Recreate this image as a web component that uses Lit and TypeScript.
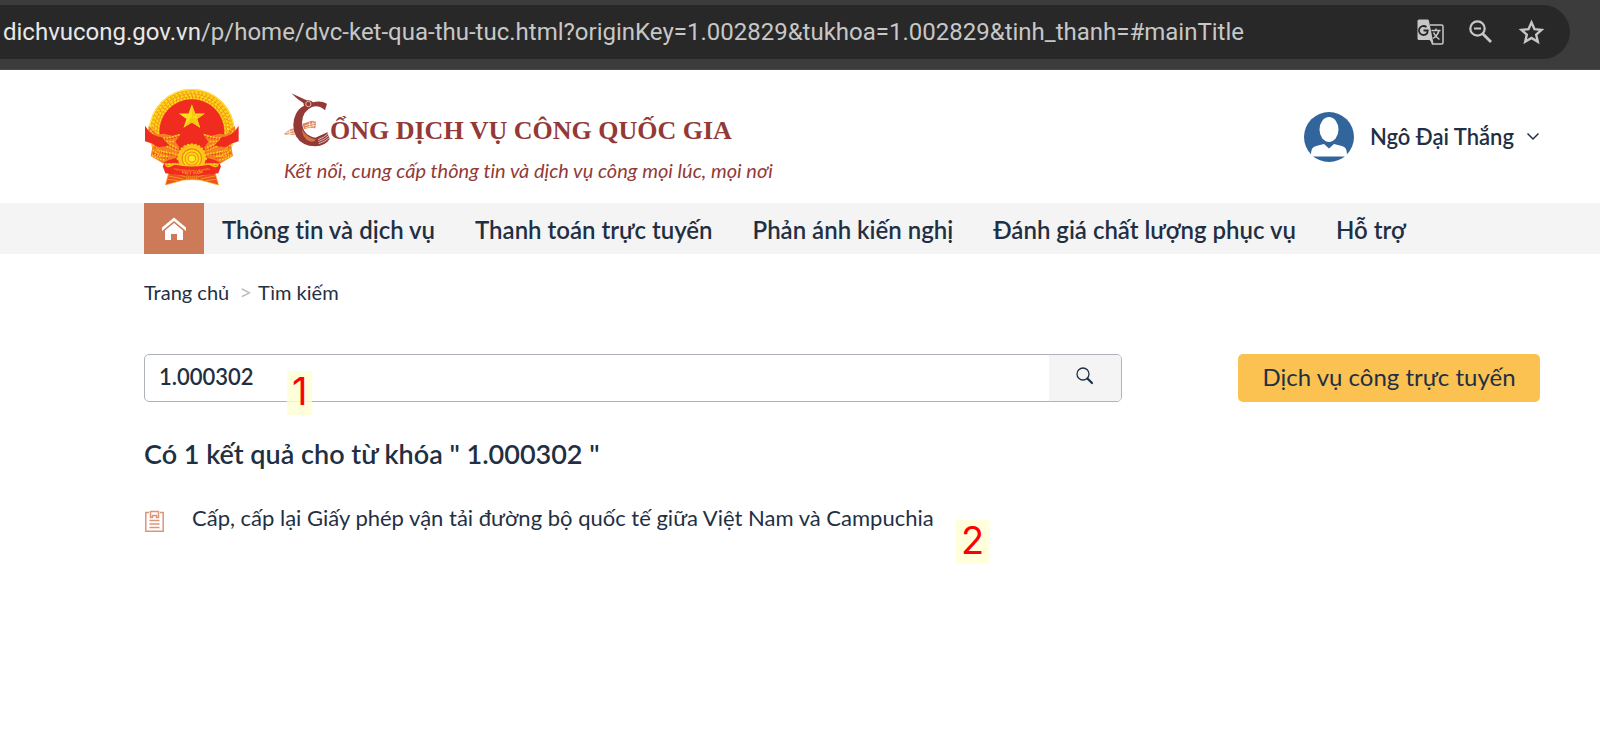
import { LitElement, html, css, svg } from "lit";
import { customElement, property, state } from "lit/decorators.js";

const ring = (r: number, color: string, width: number, dash: string) =>
  svg`<circle cx="187" cy="168" r=${r} fill="none" stroke=${color} stroke-width=${width} stroke-dasharray=${dash} />`;

const gearTeeth = Array.from({ length: 13 }, (_, i) => 180 + i * 15).map((deg) => {
  const a = (deg * Math.PI) / 180;
  return svg`<circle cx=${(187 + 41 * Math.cos(a)).toFixed(1)} cy=${(248 + 41 * Math.sin(a)).toFixed(1)} r="5" fill="#fdc516" />`;
});

const riceHalf = svg`
  <path d="M58 150 L56 170 L70 208 L64 240 L100 262 L118 252 L140 246 L150 215 L138 198 L154 174 L128 180 L104 174 L84 176 Z" fill="#f58220" />
  <g fill="none" stroke="#ffd51a" stroke-width="4" stroke-dasharray="5 4">
    <path d="M64 164 Q76 192 104 200 T142 216" />
    <path d="M84 182 Q98 190 116 186 T152 176" />
    <path d="M94 190 Q114 200 138 196" />
    <path d="M72 206 Q86 228 114 230 T140 238" />
    <path d="M70 222 Q88 240 120 242" />
    <path d="M68 238 Q86 252 110 252" />
    <path d="M104 208 Q122 216 146 226" />
  </g>
  <g fill="none" stroke="#e8301f" stroke-width="3" stroke-dasharray="4 5">
    <path d="M90 186 Q116 194 146 182" />
    <path d="M76 214 Q98 236 130 237" />
    <path d="M72 230 Q92 248 116 247" />
    <path d="M108 204 Q124 212 142 222" />
  </g>
  <path d="M47 150 L60 168 Q76 182 98 184 Q106 196 118 206 Q112 214 98 212 Q84 218 70 204 L47 196 Z" fill="#ee2b1f" />
  <path d="M82 222 Q96 230 112 226 M76 236 Q92 246 112 240" stroke="#ffd51a" stroke-width="4" stroke-dasharray="4 3" fill="none" />
`;

const emblem = svg`
  <svg class="emblem" viewBox="44 37 287 293" role="img" aria-label="Quốc huy Việt Nam">
    <circle cx="187" cy="168" r="128" fill="#f9a51b" />
    ${ring(126, "#ffe23a", 4, "none")}
    ${ring(118, "#ffdd14", 8, "8 4")}
    ${ring(118, "#e8791c", 2, "3 9")}
    ${ring(109, "#ffdd14", 7, "7 5")}
    ${ring(113, "#d9661c", 2, "4 7")}
    ${ring(101, "#ffdd14", 6, "6 4")}
    ${ring(104, "#dd6a1c", 2, "4 6")}
    <circle cx="187" cy="168" r="97" fill="#f02c20" />
    <path d="M96 200 H278 L272 262 H102 Z" fill="#f02c20" />
    <path d="M187 86 L197 113 H226 L203 130 L212 156 L187 140 L162 156 L171 130 L148 113 H177 Z" fill="#ffe11a" />
    <path d="M187 86 L187 123 L203 130 L212 156 L187 140 L162 156 L187 123 L148 113 L187 123 L226 113 L203 130 Z" fill="#f6c713" />
    ${riceHalf}
    <g transform="translate(374 0) scale(-1 1)">${riceHalf}</g>
    <path d="M124 268 L108 327 L162 312 L187 311 L212 312 L267 327 L250 268 Z" fill="#f04e23" stroke="#f9b21c" stroke-width="2" />
    <g stroke="#fbb81b" stroke-width="2" fill="none">
      <path d="M120 290 L168 302 M117 300 L160 309 M114 310 L146 314 M254 290 L206 302 M257 300 L214 309 M260 310 L228 314" />
      <path d="M172 292 V311 M178 292 V311 M184 292 V311 M190 292 V311 M196 292 V311 M202 292 V311" />
    </g>
    <circle cx="187" cy="248" r="41" fill="#fdc516" />
    ${gearTeeth}
    <circle cx="187" cy="248" r="29" fill="#fdd90d" stroke="#f47a1f" stroke-width="3" />
    <circle cx="187" cy="248" r="20" fill="none" stroke="#f58a1d" stroke-width="3" />
    <circle cx="187" cy="248" r="11" fill="#ffe81f" stroke="#f58a1d" stroke-width="3" />
    <path d="M104 262 Q120 276 140 264 Q187 276 234 264 Q254 276 270 262 L274 272 L266 292 Q187 306 108 292 L100 272 Z" fill="#f02c20" />
    <path d="M108 264 Q112 276 124 270 Q132 262 146 266 Q187 274 228 266 Q242 262 250 270 Q262 276 266 264" fill="none" stroke="#fdc516" stroke-width="4" />
    <path id="band-top" d="M128 280 Q187 292 246 280" fill="none" />
    <path id="band-name" d="M148 290 Q187 300 228 290" fill="none" />
    <text class="band small"><textPath href="#band-top" startOffset="50%">CỘNG HÒA XÃ HỘI CHỦ NGHĨA</textPath></text>
    <text class="band"><textPath href="#band-name" startOffset="50%">VIỆT NAM</textPath></text>
  </svg>
`;

const craneC = svg`
  <svg class="crane" viewBox="44 38 138 162" aria-hidden="true">
    <path d="M44 160 L62 147 L76 143 L76 164 L48 163 Z" fill="#e39a74" />
    <path d="M50 158 L74 150 M54 162 L75 158 M60 148 L62 164" stroke="#fff" stroke-width="2" />
    <path d="M100 130 L128 121 L140 124 L138 144 L124 142 L104 146 Z" fill="#dd8256" />
    <path d="M106 136 L138 128 M108 142 L138 135 M120 124 L122 142 M130 124 L132 142" stroke="#fff" stroke-width="2" />
    <path d="M66 39 L112 60 Q124 58 131 66 Q154 60 173 70 L167 90 Q148 72 128 80 Q100 92 98 126 Q100 166 138 172 L174 156 L181 176 Q168 197 138 198 Q98 198 80 168 Q64 132 80 100 Q88 84 104 76 L102 68 Q84 58 66 39 Z" fill="#933a37" />
    <circle cx="117" cy="71" r="8" fill="none" stroke="#e2b39c" stroke-width="3" />
    <path d="M98 146 Q108 170 140 178 Q130 190 112 178 Q98 166 98 146 Z" fill="#d0744a" />
    <path d="M146 178 Q164 172 176 160 M147 184 Q166 178 178 166 M148 190 Q168 184 180 172" stroke="#fff" stroke-width="2" fill="none" />
  </svg>
`;

@customElement("browser-bar")
class BrowserBar extends LitElement {
  @property() host = "";
  @property() path = "";

  static styles = css`
    :host {
      display: block;
      padding: 5px 30px 10px 0;
      background: #3c3c3c;
      border-bottom: 1px solid #484848;
    }
    .pill {
      display: flex;
      align-items: center;
      justify-content: space-between;
      height: 54px;
      padding: 0 24px 0 3px;
      border-radius: 0 27px 27px 0;
      background: #282828;
      color: #c7c7c7;
      font: 24px/32px Roboto, sans-serif;
      white-space: nowrap;
    }
    .host { color: #e8e8e8; }
    .tools { display: flex; gap: 20px; }
    button {
      display: block;
      padding: 0;
      border: 0;
      background: none;
      color: #c7c7c7;
      cursor: pointer;
    }
    svg { display: block; width: 30px; height: 30px; }
  `;

  render() {
    return html`
      <div class="pill">
        <span><span class="host">${this.host}</span>${this.path}</span>
        <div class="tools">
          <button aria-label="Dịch trang này">
            <svg viewBox="0 0 30 30">
              <path d="M14 8h11.500a1.500 1.500 0 0 1 1.500 1.500v16a1.500 1.500 0 0 1-1.500 1.500H16.500L14 20" fill="none" stroke="currentColor" stroke-width="1.500" />
              <path d="M3 2.500h8.500a1.500 1.500 0 0 1 1.400 1L17.500 26.500l-4-3.500H3a1.500 1.500 0 0 1-1.500-1.500V4A1.500 1.500 0 0 1 3 2.500Z" fill="currentColor" />
              <path d="M7.500 13.500h4.200c0 3-1.500 4.500-4.200 4.500a4.500 4.500 0 1 1 3-7.800" fill="none" stroke="#282828" stroke-width="1.800" />
              <path d="M15.500 13.500h9M20 11.500v2M23 13.500c-.8 3.500-3 6-6 8M17.500 15.500c1 2.500 3 5 6 7" fill="none" stroke="currentColor" stroke-width="1.500" />
            </svg>
          </button>
          <button aria-label="Thu phóng">
            <svg viewBox="0 0 30 30" fill="none" stroke="currentColor">
              <circle cx="11.500" cy="11.500" r="7.200" stroke-width="2.200" />
              <path d="M8 11.500h7" stroke-width="2" />
              <path d="M16.500 16.500l8.500 8.500" stroke-width="2.800" />
            </svg>
          </button>
          <button aria-label="Đánh dấu trang">
            <svg viewBox="0 0 30 30" fill="none" stroke="currentColor" stroke-width="2.400">
              <path d="M15.500 5.500l3 6.700 7 .7-5.300 4.800 1.600 7-6.300-3.800-6.300 3.800 1.600-7-5.300-4.800 7-.7Z" />
            </svg>
          </button>
        </div>
      </div>
    `;
  }
}

@customElement("site-header")
class SiteHeader extends LitElement {
  static styles = css`
    :host {
      display: flex;
      align-items: center;
      justify-content: space-between;
      padding: 17px 60px 17px 144px;
    }
    .brand { display: flex; align-items: center; gap: 44px; color: #933a37; text-decoration: none; }
    .emblem { display: block; width: 96px; height: 98px; }
    .band { font: 700 13px "Liberation Serif", serif; fill: #fbb81b; text-anchor: middle; }
    .small { font-size: 7px; }
    .words { padding-top: 6px; }
    .name { display: flex; align-items: flex-end; }
    .crane { width: 46px; height: 54px; }
    h1 { margin: 0; font: 700 26px/32px "Liberation Serif", serif; white-space: nowrap; }
    .slogan {
      margin: 0;
      padding-top: 7px;
      font: italic 20px/32px Lato, "Noto Sans", sans-serif;
      font-variant-ligatures: none;
    }
    .user {
      display: flex;
      align-items: center;
      gap: 16px;
      padding: 0;
      border: 0;
      background: none;
      color: #1f3044;
      font: 600 22px/32px Lato, "Noto Sans", sans-serif;
      cursor: pointer;
    }
    .avatar { width: 50px; height: 50px; }
    .label { display: flex; align-items: center; gap: 12px; }
    .chevron { width: 14px; height: 10px; }
  `;

  render() {
    return html`
      <a class="brand" href="#home">
        ${emblem}
        <div class="words">
          <div class="name">${craneC}<h1>ỔNG DỊCH VỤ CÔNG QUỐC GIA</h1></div>
          <p class="slogan">Kết nối, cung cấp thông tin và dịch vụ công mọi lúc, mọi nơi</p>
        </div>
      </a>
      <button class="user">
        <svg class="avatar" viewBox="0 0 50 50" aria-hidden="true">
          <circle cx="25" cy="25" r="25" fill="#31659c" />
          <ellipse cx="25" cy="17.500" rx="9.500" ry="12.500" fill="#fff" />
          <path d="M7 43.500C7 36 9 34.500 14 33.500L20 32l5 4.500L30 32l6 1.500c5 1 7 2.500 7 10v1H7Z" fill="#fff" />
        </svg>
        <span class="label">
          Ngô Đại Thắng
          <svg class="chevron" viewBox="0 0 14 10" fill="none" stroke="currentColor" stroke-width="1.500" aria-hidden="true">
            <path d="M1.500 1.500L7 7l5.500-5.500" />
          </svg>
        </span>
      </button>
    `;
  }
}

@customElement("main-nav")
class MainNav extends LitElement {
  @property({ attribute: false }) items: string[] = [];

  static styles = css`
    nav { display: flex; gap: 18px; padding-left: 144px; background: #f4f4f4; }
    .home {
      display: flex;
      align-items: center;
      justify-content: center;
      width: 60px;
      height: 51px;
      background: #cd7a58;
    }
    .home svg { width: 26px; height: 24px; }
    .links { display: flex; gap: 40px; align-items: center; padding-top: 2px; }
    .link {
      color: #1f3044;
      font: 600 24px/32px Lato, "Noto Sans", sans-serif;
      font-variant-ligatures: none;
      text-decoration: none;
      white-space: nowrap;
    }
  `;

  render() {
    return html`
      <nav>
        <a class="home" href="#home" aria-label="Trang chủ">
          <svg viewBox="0 0 26 24" fill="#fff" aria-hidden="true">
            <path d="M13 .5L1 10.500v3.500L13 4l12 10v-3.500Z" />
            <path d="M13 6L4 13.500V23h6v-6h6v6h6v-9.500Z" />
          </svg>
        </a>
        <div class="links">${this.items.map((item) => html`<a class="link" href="#menu">${item}</a>`)}</div>
      </nav>
    `;
  }
}

@customElement("step-mark")
class StepMark extends LitElement {
  static styles = css`
    :host {
      display: block;
      padding: 0 5px 4px;
      background: rgba(255, 255, 210, 0.8);
      color: #f00;
      font: 400 38px/40px Inter, sans-serif;
      text-align: center;
    }
  `;

  render() {
    return html`<slot></slot>`;
  }
}

@customElement("app-root")
class AppRoot extends LitElement {
  @state() private keyword = "1.000302";

  private menu = ["Thông tin và dịch vụ", "Thanh toán trực tuyến", "Phản ánh kiến nghị", "Đánh giá chất lượng phục vụ", "Hỗ trợ"];

  static styles = css`
    :host {
      display: block;
      min-height: 100vh;
      background: #fff;
      color: #1f3044;
      font-family: Lato, "Noto Sans", sans-serif;
      font-variant-ligatures: none;
    }
    main { padding: 22px 60px 22px 144px; }
    .crumbs { display: flex; font-size: 20px; line-height: 32px; }
    .crumbs a { color: inherit; text-decoration: none; }
    .sep { padding: 0 6px 0 10px; color: #bcbfc3; font-size: 22px; }
    .tools { display: flex; gap: 116px; margin-top: 46px; }
    .search {
      position: relative;
      box-sizing: border-box;
      display: flex;
      flex: 1;
      height: 48px;
      border: 1px solid #adb3b9;
      border-radius: 5px;
    }
    .field {
      flex: 1;
      min-width: 0;
      padding: 0 14px 2px;
      border: 0;
      border-radius: 5px;
      outline: 0;
      background: none;
      color: inherit;
      font: 600 22px/32px Lato, "Noto Sans", sans-serif;
    }
    .go {
      display: flex;
      justify-content: center;
      width: 72px;
      padding: 12px 0;
      border: 0;
      border-radius: 0 4px 4px 0;
      background: #f4f4f4;
      color: inherit;
      cursor: pointer;
    }
    .go svg { width: 18px; height: 18px; }
    .online {
      width: 302px;
      height: 48px;
      padding: 0 0 2px;
      border: 0;
      border-radius: 5px;
      background: #fbc252;
      color: inherit;
      font: 24px/32px Lato, "Noto Sans", sans-serif;
      cursor: pointer;
    }
    h2 { margin: 36px 0 0; font: 600 27px/32px Lato, "Noto Sans", sans-serif; }
    .results { margin: 0; padding: 32px 0 0; list-style: none; }
    .result { position: relative; display: flex; align-items: center; gap: 27px; width: fit-content; }
    .result a { color: inherit; font-size: 22px; line-height: 32px; text-decoration: none; }
    .doc { width: 21px; height: 24px; margin-top: 6px; }
    .mark-one { position: absolute; top: 16px; left: 142px; }
    .mark-two { position: absolute; top: 18px; left: 812px; }
  `;

  render() {
    return html`
      <browser-bar
        host="dichvucong.gov.vn"
        path="/p/home/dvc-ket-qua-thu-tuc.html?originKey=1.002829&tukhoa=1.002829&tinh_thanh=#mainTitle"
      ></browser-bar>
      <site-header></site-header>
      <main-nav .items=${this.menu}></main-nav>
      <main>
        <div class="crumbs">
          <a href="#home">Trang chủ</a><span class="sep">&gt;</span><a href="#search">Tìm kiếm</a>
        </div>
        <div class="tools">
          <div class="search">
            <input
              class="field"
              type="text"
              aria-label="Từ khóa"
              .value=${this.keyword}
              @input=${(e: Event) => (this.keyword = (e.target as HTMLInputElement).value)}
            />
            <button class="go" aria-label="Tìm kiếm">
              <svg viewBox="0 0 18 18" fill="none" stroke="currentColor" aria-hidden="true">
                <circle cx="7" cy="7" r="6" stroke-width="1.300" />
                <path d="M11.500 11.500l4.500 4.500" stroke-width="2.200" stroke-linecap="round" />
              </svg>
            </button>
            <step-mark class="mark-one">1</step-mark>
          </div>
          <button class="online">Dịch vụ công trực tuyến</button>
        </div>
        <h2>Có 1 kết quả cho từ khóa " ${this.keyword} "</h2>
        <ul class="results">
          <li class="result">
            <svg class="doc" viewBox="0 0 21 24" fill="none" stroke="#dc957a" stroke-width="1.500" aria-hidden="true">
              <path d="M5 3.500H1.800v18.700h17.400V3.500H16" />
              <path d="M6.500 8.500v-6h8v6H12.500V6.500h-4v2Z" />
              <path d="M5.500 11.500h10M5.500 15h10M5.500 18.500h10" />
            </svg>
            <a href="#result">Cấp, cấp lại Giấy phép vận tải đường bộ quốc tế giữa Việt Nam và Campuchia</a>
            <step-mark class="mark-two">2</step-mark>
          </li>
        </ul>
      </main>
    `;
  }
}
